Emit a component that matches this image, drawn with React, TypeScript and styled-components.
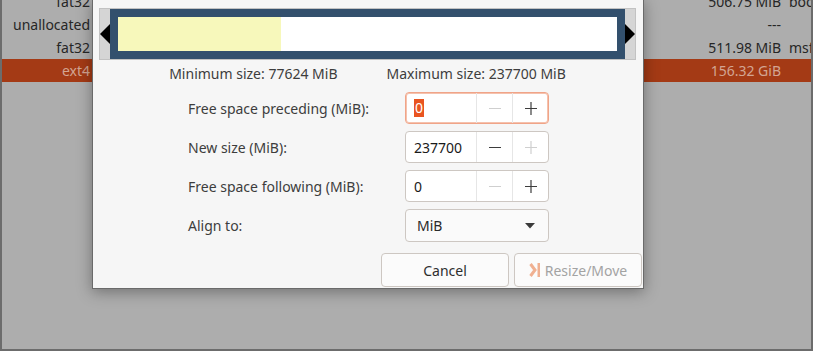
import React from 'react';
import styled, { createGlobalStyle } from 'styled-components';

const GlobalStyle = createGlobalStyle`
    html, body {
        margin: 0;
        padding: 0;
        background: #adadad;
    }
`

const Screen = styled.div`
    position: relative;
    width: 813px;
    height: 351px;
    box-sizing: border-box;
    overflow: hidden;
    background: #adadad;
    border-left: 2px solid #6c6c6c;
    border-right: 2px solid #6c6c6c;
    border-bottom: 2px solid #6c6c6c;
    font-family: 'Noto Sans', 'DejaVu Sans', sans-serif;
`

const PartitionList = styled.div`
    margin-top: -10px;
`

const ListRow = styled.div<{ selected?: boolean }>`
    display: grid;
    grid-template-columns: 88px 1fr 92px 30px;
    align-items: center;
    height: 23px;
    font-size: 14px;
    color: ${p => (p.selected ? '#d3a592' : '#262626')};
    background: ${p => (p.selected ? '#a43a15' : 'transparent')};
    white-space: nowrap;
`

const FsCell = styled.span`
    text-align: right;
`

const SizeCell = styled.span`
    text-align: right;
`

const FlagCell = styled.span`
    padding-left: 8px;
`

const Dialog = styled.div`
    position: absolute;
    left: 90px;
    top: -1px;
    width: 552px;
    height: 290px;
    box-sizing: border-box;
    background: #f6f6f6;
    border: 1px solid #6a6a6a;
    box-shadow: 0 3px 14px rgba(0, 0, 0, 0.35);
    padding: 8px 1px 0 6px;
    display: flex;
    flex-direction: column;
    color: #3d3d3d;
`

const Visualizer = styled.div`
    display: flex;
    align-items: stretch;
    height: 52px;
    box-sizing: border-box;
    margin-right: 6px;
    background: #d5d5d5;
    border: 1px solid #c2c2c2;
`

const ArrowCell = styled.div`
    width: 10px;
    display: flex;
    align-items: center;
    justify-content: center;
`

const PartBlock = styled.div`
    flex: 1;
    display: flex;
    border: 8px solid #33506d;
    margin: 0 0 0 0;
`

const UsedArea = styled.div`
    width: 163px;
    background: #f7f8bb;
`

const FreeArea = styled.div`
    flex: 1;
    background: #ffffff;
`

const Limits = styled.div`
    display: flex;
    justify-content: center;
    gap: 49px;
    height: 27px;
    align-items: center;
    font-size: 14px;
    padding-right: 6px;
`

const Form = styled.div`
    display: grid;
    grid-template-columns: 217px 144px;
    row-gap: 7px;
    padding-left: 89px;
    margin-top: 5px;
`

const FieldLabel = styled.div`
    display: flex;
    align-items: center;
    font-size: 14px;
    height: 32px;
`

const SpinBox = styled.div<{ focused?: boolean }>`
    display: flex;
    height: 32px;
    box-sizing: border-box;
    border: 1px solid ${p => (p.focused ? '#f0a488' : '#cdc7c2')};
    box-shadow: ${p => (p.focused ? 'inset 0 0 0 1px #f5c2ae' : 'none')};
    border-radius: 4px;
    background: #ffffff;
    overflow: hidden;
`

const SpinEntry = styled.div`
    flex: 1;
    display: flex;
    align-items: center;
    padding-left: 8px;
    font-size: 14px;
    color: #1a1a1a;
`

const Selected = styled.span`
    background: #e95420;
    color: #ffffff;
    padding: 0 1px;
    line-height: 18px;
`

const SpinButton = styled.div<{ disabled?: boolean }>`
    width: 35px;
    display: flex;
    align-items: center;
    justify-content: center;
    border-left: 1px solid #e6e6e6;
    color: ${p => (p.disabled ? '#cfcfcf' : '#3d3d3d')};
`

const Combo = styled.div`
    display: flex;
    align-items: center;
    justify-content: space-between;
    height: 33px;
    box-sizing: border-box;
    border: 1px solid #cdc7c2;
    border-radius: 4px;
    background: #fafafa;
    padding: 0 13px 0 11px;
    font-size: 14px;
    color: #2a2a2a;
`

const ButtonRow = styled.div`
    margin-top: auto;
    margin-bottom: 1px;
    display: flex;
    justify-content: flex-end;
    gap: 5px;
`

const DialogButton = styled.div<{ disabled?: boolean }>`
    width: 128px;
    height: 34px;
    box-sizing: border-box;
    display: flex;
    align-items: center;
    justify-content: center;
    gap: 4px;
    border: 1px solid #cdc7c2;
    border-radius: 4px;
    background: #fbfbfb;
    font-size: 14px;
    color: ${p => (p.disabled ? '#a3a3a3' : '#2e2e2e')};
`

const Minus = ({ disabled }: { disabled?: boolean }) => (
    <SpinButton disabled={disabled}>
        <svg width="14" height="14" viewBox="0 0 14 14">
            <line x1="1" y1="7.5" x2="13" y2="7.5" stroke="currentColor" strokeWidth="1.2" />
        </svg>
    </SpinButton>
);

const Plus = ({ disabled }: { disabled?: boolean }) => (
    <SpinButton disabled={disabled}>
        <svg width="14" height="14" viewBox="0 0 14 14">
            <line x1="1" y1="7.5" x2="13" y2="7.5" stroke="currentColor" strokeWidth="1.2" />
            <line x1="7" y1="1" x2="7" y2="14" stroke="currentColor" strokeWidth="1.2" />
        </svg>
    </SpinButton>
);

const rows = [
    { fs: 'fat32', size: '506.75 MiB', flags: 'boot' },
    { fs: 'unallocated', size: '---', flags: '' },
    { fs: 'fat32', size: '511.98 MiB', flags: 'msftdata' },
    { fs: 'ext4', size: '156.32 GiB', flags: '', selected: true },
];

export default function App() {
    return (
        <Screen>
            <GlobalStyle />
            <PartitionList>
                {rows.map((r, i) => (
                    <ListRow key={i} selected={r.selected}>
                        <FsCell>{r.fs}</FsCell>
                        <span />
                        <SizeCell>{r.size}</SizeCell>
                        <FlagCell>{r.flags}</FlagCell>
                    </ListRow>
                ))}
            </PartitionList>

            <Dialog>
                <Visualizer>
                    <ArrowCell>
                        <svg width="10" height="20" viewBox="0 0 10 20">
                            <polygon points="10,0 0,10 10,20" fill="#000" />
                        </svg>
                    </ArrowCell>
                    <PartBlock>
                        <UsedArea />
                        <FreeArea />
                    </PartBlock>
                    <ArrowCell>
                        <svg width="10" height="20" viewBox="0 0 10 20">
                            <polygon points="0,0 10,10 0,20" fill="#000" />
                        </svg>
                    </ArrowCell>
                </Visualizer>

                <Limits>
                    <span>Minimum size: 77624 MiB</span>
                    <span>Maximum size: 237700 MiB</span>
                </Limits>

                <Form>
                    <FieldLabel>Free space preceding (MiB):</FieldLabel>
                    <SpinBox focused>
                        <SpinEntry><Selected>0</Selected></SpinEntry>
                        <Minus disabled />
                        <Plus />
                    </SpinBox>

                    <FieldLabel>New size (MiB):</FieldLabel>
                    <SpinBox>
                        <SpinEntry>237700</SpinEntry>
                        <Minus />
                        <Plus disabled />
                    </SpinBox>

                    <FieldLabel>Free space following (MiB):</FieldLabel>
                    <SpinBox>
                        <SpinEntry>0</SpinEntry>
                        <Minus disabled />
                        <Plus />
                    </SpinBox>

                    <FieldLabel>Align to:</FieldLabel>
                    <Combo>
                        <span>MiB</span>
                        <svg width="10" height="6" viewBox="0 0 10 6">
                            <polygon points="0,0 10,0 5,5.5" fill="#3a3a3a" />
                        </svg>
                    </Combo>
                </Form>

                <ButtonRow>
                    <DialogButton>Cancel</DialogButton>
                    <DialogButton disabled>
                        <svg width="12" height="16" viewBox="0 0 12 16">
                            <polyline points="1.5,2 6,8 1.5,14" fill="none" stroke="#f0b091" strokeWidth="3" />
                            <rect x="8.5" y="1" width="2.5" height="14" fill="#f0b091" />
                        </svg>
                        Resize/Move
                    </DialogButton>
                </ButtonRow>
            </Dialog>
        </Screen>
    );
}
